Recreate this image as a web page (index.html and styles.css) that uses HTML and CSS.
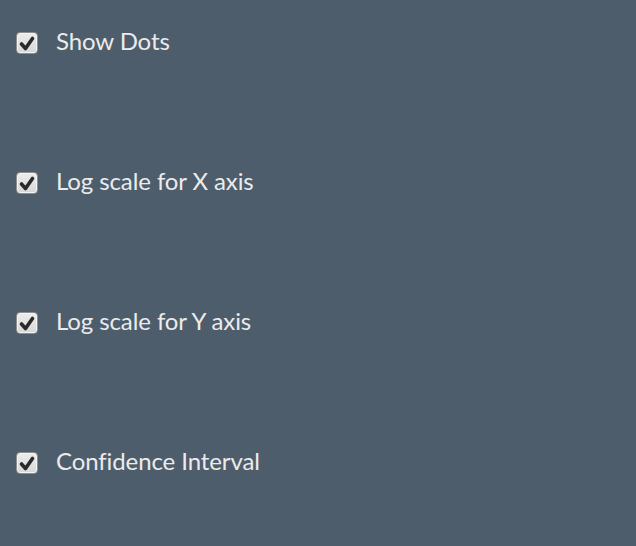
FILE: index.html
```html
<!DOCTYPE html>
<html>
<head>
<meta charset="utf-8">
<link rel="stylesheet" href="styles.css">
</head>
<body>
<div class="list">
  <label class="row"><span class="box"><svg viewBox="0 0 22 22" width="22" height="22"><path d="M5.5 12 L9.5 16.5 L16.5 6.5" fill="none" stroke="#2a2a2a" stroke-width="3.6" stroke-linecap="round" stroke-linejoin="round"/></svg></span><span class="text">Show Dots</span></label>
  <label class="row"><span class="box"><svg viewBox="0 0 22 22" width="22" height="22"><path d="M5.5 12 L9.5 16.5 L16.5 6.5" fill="none" stroke="#2a2a2a" stroke-width="3.6" stroke-linecap="round" stroke-linejoin="round"/></svg></span><span class="text">Log scale for X axis</span></label>
  <label class="row"><span class="box"><svg viewBox="0 0 22 22" width="22" height="22"><path d="M5.5 12 L9.5 16.5 L16.5 6.5" fill="none" stroke="#2a2a2a" stroke-width="3.6" stroke-linecap="round" stroke-linejoin="round"/></svg></span><span class="text">Log scale for Y axis</span></label>
  <label class="row"><span class="box"><svg viewBox="0 0 22 22" width="22" height="22"><path d="M5.5 12 L9.5 16.5 L16.5 6.5" fill="none" stroke="#2a2a2a" stroke-width="3.6" stroke-linecap="round" stroke-linejoin="round"/></svg></span><span class="text">Confidence Interval</span></label>
</div>
</body>
</html>
```
FILE: styles.css
```css
html, body {
  margin: 0;
  padding: 0;
  background: #4e5d6c;
  height: 100%;
  overflow: hidden;
}
body {
  font-family: Lato, "Open Sans", sans-serif;
  color: #ebebeb;
}
.list {
  display: flex;
  flex-direction: column;
  padding: 26px 0 0 16px;
}
.row {
  display: flex;
  align-items: flex-start;
  gap: 18px;
  height: 140px;
}
.row:last-child {
  height: auto;
}
.box {
  position: relative;
  width: 22px;
  height: 22px;
  flex: none;
  box-sizing: border-box;
  margin-top: 6px;
  border: 1px solid #8e8e8e;
  border-radius: 4px;
  background: linear-gradient(#ededed, #d8d8d8);
  box-shadow: inset 0 0 0 1px #f4f4f4;
}
.box svg {
  position: absolute;
  left: -1px;
  top: -1px;
}
.text {
  font-size: 24px;
  line-height: 30px;
  letter-spacing: -0.1px;
}
```
